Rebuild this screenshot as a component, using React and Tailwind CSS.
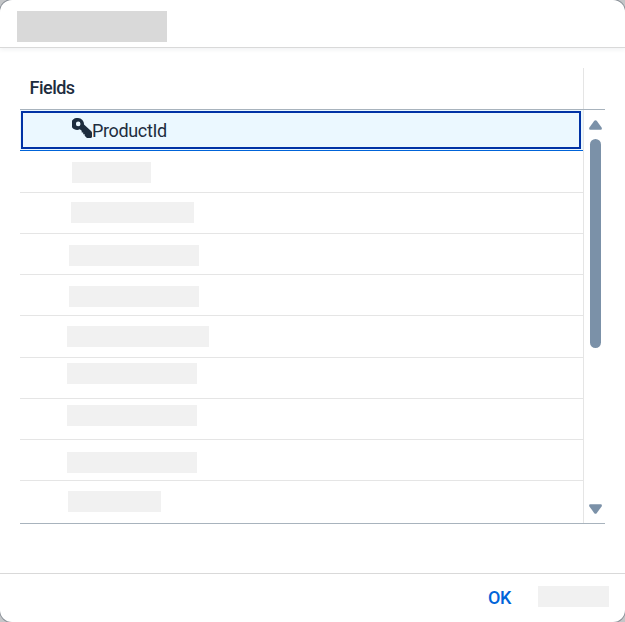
const rows = [
  { row: 'h-[42px] pt-[11px] pl-[52px]', bar: 'w-[79px]' },
  { row: 'h-[41px] pt-[9px] pl-[51px]', bar: 'w-[123px]' },
  { row: 'h-[41px] pt-[11px] pl-[49px]', bar: 'w-[130px]' },
  { row: 'h-[41px] pt-[11px] pl-[49px]', bar: 'w-[130px]' },
  { row: 'h-[42px] pt-[10px] pl-[47px]', bar: 'w-[142px]' },
  { row: 'h-[41px] pt-[5px] pl-[47px]', bar: 'w-[130px]' },
  { row: 'h-[41px] pt-[6px] pl-[47px]', bar: 'w-[130px]' },
  { row: 'h-[41px] pt-[12px] pl-[47px]', bar: 'w-[130px]' },
];

function KeyIcon() {
  return (
    <svg className="block h-5 w-5 shrink-0" viewBox="0 0 20 20" fill="#1d2d3e">
      <path
        fillRule="evenodd"
        d="M6 0a6 6 0 0 1 6 6.400L19.300 13.300c.5.500.7 1 .7 1.600v3.600c0 .9-.6 1.500-1.500 1.500h-2.700c-.6 0-1-.2-1.400-.6l-1.700-1.600v-1.500h-1.500v-1.900h-1.500v-1.700l-1.900-1.400A6 6 0 1 1 6 0Zm.2 3.600a2.300 2.300 0 1 0 0 4.600 2.300 2.300 0 0 0 0-4.600Z"
      />
    </svg>
  );
}

function Arrow({ down }) {
  return (
    <svg className={down ? 'block rotate-180' : 'block'} width="13" height="10" viewBox="0 0 13 10" fill="#7b91a8">
      <path d="M5.300.8Q6.500-.5 7.700.8L12.600 7.600Q13.500 9.700 11.700 9.700H1.300Q-.5 9.700.4 7.600Z" />
    </svg>
  );
}

export default function App() {
  return (
    <div className="h-[622px] w-[625px] overflow-hidden bg-[#c4c6c8] font-['Roboto','Liberation_Sans',sans-serif] text-[#1d2d3e]">
      <div className="flex h-full flex-col overflow-hidden rounded-[12px] bg-white shadow-[0_0_0_1px_#8a9098]">
        <header className="h-12 shrink-0 border-b border-[#d9d9d9] pt-[11px] pl-[17px] shadow-[0_2px_4px_rgba(34,53,72,0.06)]">
          <div className="h-[31px] w-[150px] bg-[#d9d9d9]" />
        </header>
        <main className="h-[525px] shrink-0 px-5 pt-5">
          <div className="flex h-[456px] flex-col border-b border-[#a8b3bd]">
            <div className="flex h-[42px] shrink-0 border-b border-[#a8b3bd]">
              <div className="flex w-[563px] items-center pb-[3px] pl-[9.500px] text-[18px] font-medium tracking-[-0.5px]">
                Fields
              </div>
              <div className="w-px bg-[#e5e5e5]" />
            </div>
            <div className="flex grow">
              <div className="w-[563px]">
                <div className="h-[41px] border-b border-[#0064d9] bg-[#ebf8ff]">
                  <div className="ml-px flex h-10 items-start pt-px">
                    <div className="flex h-[38px] w-[560px] items-start border-2 border-[#0032a5] pl-[49px]">
                      <div className="pt-[5px]">
                        <KeyIcon />
                      </div>
                      <span className="pt-[6px] text-[18px] leading-6 tracking-[-0.35px]">ProductId</span>
                    </div>
                  </div>
                </div>
                {rows.map((r, i) => (
                  <div key={i} className={`${r.row} border-b border-[#e5e5e5]`}>
                    <div className={`${r.bar} h-[21px] bg-[#f1f1f1]`} />
                  </div>
                ))}
                <div className="h-[42px] pt-[10px] pl-12">
                  <div className="h-[21px] w-[93px] bg-[#f1f1f1]" />
                </div>
              </div>
              <div className="w-px bg-[#e5e5e5]" />
              <div className="flex w-[21px] flex-col pt-[10px] pb-[9px] pl-[5px]">
                <Arrow />
                <div className="mt-[9px] ml-px h-[209px] w-[11px] rounded-full bg-[#7b91a8]" />
                <div className="mt-auto">
                  <Arrow down />
                </div>
              </div>
            </div>
          </div>
        </main>
        <footer className="flex h-[49px] shrink-0 items-start justify-end border-t border-[#d9d9d9] pt-3 pr-4">
          <button className="mr-[27px] text-[18px] leading-6 font-medium tracking-[-0.4px] text-[#0064d9]">OK</button>
          <div className="h-[21px] w-[71px] bg-[#f1f1f1]" />
        </footer>
      </div>
    </div>
  );
}
